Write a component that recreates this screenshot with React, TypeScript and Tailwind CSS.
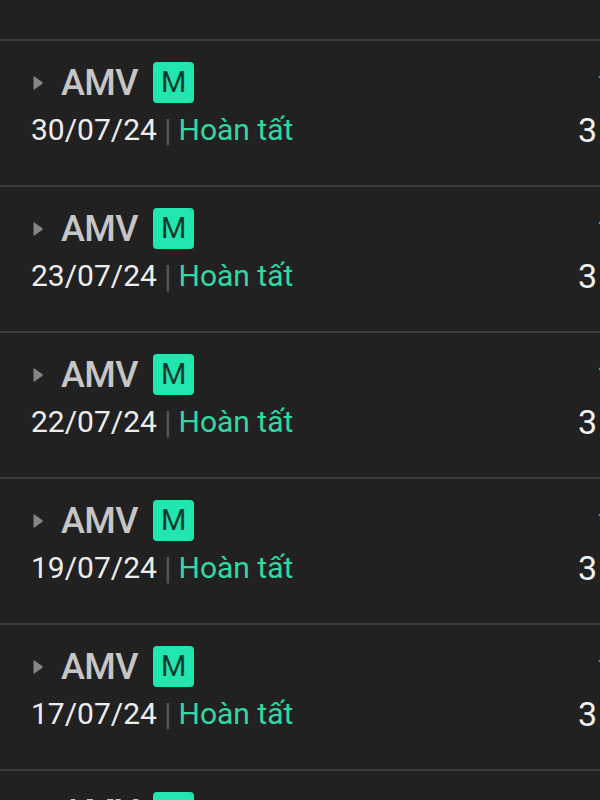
const rows = [
  { date: "01/08/24", time: "15:40", amount: "30.000" },
  { date: "30/07/24", time: "14:25", amount: "30.000" },
  { date: "23/07/24", time: "10:12", amount: "30.000" },
  { date: "22/07/24", time: "19:03", amount: "30.000" },
  { date: "19/07/24", time: "11:47", amount: "30.000" },
  { date: "17/07/24", time: "16:30", amount: "30.000" },
  { date: "15/07/24", time: "12:05", amount: "30.000" },
];

function Caret() {
  return (
    <svg width="12" height="16" viewBox="0 0 12 16" className="shrink-0">
      <path d="M1.5 2.4 Q1.5 1 2.8 1.8 L10.2 7 Q11.2 8 10.2 9 L2.8 14.2 Q1.5 15 1.5 13.6 Z" fill="#858585" />
    </svg>
  );
}

function Row({ date, time, amount }: { date: string; time: string; amount: string }) {
  return (
    <div className="flex h-[146px] border-b-2 border-[#3a3a3a] pt-[21px]">
      <div className="flex flex-col pl-[31px]">
        <div className="flex h-[41px] items-center">
          <span className="ml-[1px]">
            <Caret />
          </span>
          <span className="ml-[17px] text-[36px] font-medium leading-none tracking-[-0.5px] text-[#c6c6c6]">AMV</span>
          <span className="ml-[15px] flex h-[41px] w-[41px] items-center justify-center rounded-[4px] bg-[#22e6b0] text-[29px] leading-none text-[#103a2e]">
            M
          </span>
        </div>
        <div className="mt-[9px] flex h-[36px] items-center text-[30px] leading-none">
          <span className="text-[#ededed]">{date}</span>
          <span className="mx-[7px] text-[31px] text-[#585858]">|</span>
          <span className="text-[#30d9a3]">Hoàn tất</span>
        </div>
      </div>
      <div className="ml-auto mr-[-124px] flex w-[146px] shrink-0 flex-col">
        <div className="flex h-[41px] items-center pl-[19px] text-[22px] leading-none text-[#9a9a9a]">{time}</div>
        <div className="mt-[9px] flex h-[36px] items-center text-[34px] leading-none tracking-[2px] text-[#f2f2f2]">{amount}</div>
      </div>
    </div>
  );
}

export default function App() {
  return (
    <div
      className="h-[800px] w-[600px] overflow-hidden bg-[#212121]"
      style={{ fontFamily: "Roboto, 'Noto Sans', sans-serif" }}
    >
      <div className="-mt-[105px]">
        {rows.map((r) => (
          <Row key={r.date} {...r} />
        ))}
      </div>
    </div>
  );
}
